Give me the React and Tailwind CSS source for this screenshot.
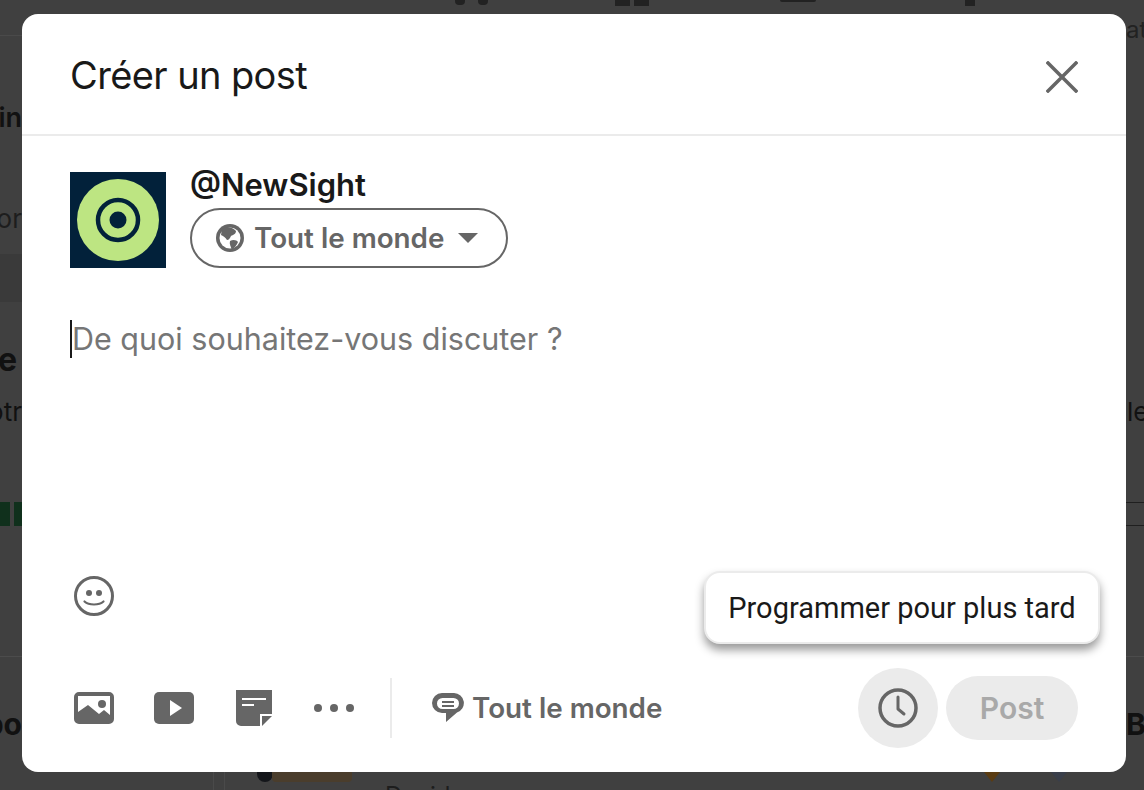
import React from 'react';

const font = { fontFamily: 'Inter, "Liberation Sans", sans-serif' };

// what shows of the dimmed page behind the modal
const Backdrop = () => (
    <div className="absolute inset-0 flex overflow-hidden text-[#111] font-semibold">
        <div className="flex w-[22px] shrink-0 flex-col items-end overflow-hidden">
            <div className="h-[36px] w-full shrink-0 border-b border-[#4a4a4a]" />
            <div className="h-[66px] w-full shrink-0" />
            <div className="h-[32px] shrink-0 whitespace-nowrap text-[27px] leading-[32px]">ain</div>
            <div className="h-[69px] w-full shrink-0" />
            <div className="h-[32px] shrink-0 whitespace-nowrap text-[26px] leading-[32px] font-normal text-[#1d1d1d]">mor</div>
            <div className="mt-[19px] h-[48px] w-full shrink-0 bg-[#3a3a3a]" />
            <div className="mt-[38px] mr-[5px] h-[40px] shrink-0 whitespace-nowrap text-[32px] leading-[40px] font-bold">e</div>
            <div className="mt-[16px] h-[32px] shrink-0 whitespace-nowrap text-[26px] leading-[32px] font-normal">otr</div>
            <div className="mt-[74px] flex h-[24px] w-full shrink-0 gap-[4px]">
                <div className="h-full w-[10px] bg-[#10301c]" />
                <div className="h-full w-[8px] bg-[#10301c]" />
            </div>
            <div className="mt-[130px] h-px w-full shrink-0 bg-[#4c4c4c]" />
            <div className="mt-[49px] h-[36px] shrink-0 whitespace-nowrap text-[30px] leading-[36px] font-bold">bo</div>
        </div>

        <div className="flex flex-1 flex-col justify-between">
            <div className="flex h-[14px] items-start pl-[433px]">
                <div className="h-[5px] w-[10px] rounded-b bg-[#222]" />
                <div className="ml-[13px] h-[5px] w-[10px] rounded-b bg-[#222]" />
                <div className="ml-[127px] h-[6px] w-[15px] bg-[#222]" />
                <div className="ml-[4px] h-[6px] w-[15px] bg-[#222]" />
                <div className="ml-[131px] h-[2px] w-[36px] rounded-b bg-[#222]" />
                <div className="ml-[149px] h-[6px] w-[10px] bg-[#222]" />
            </div>
            <div className="flex h-[18px] items-start overflow-hidden pl-[191px]">
                <div className="h-full w-px bg-[#4a4a4a]" />
                <div className="ml-[10px] h-full w-px bg-[#4a4a4a]" />
                <div className="ml-[32px] h-[10px] w-[16px] shrink-0 rounded-b-full bg-[#14161a]" />
                <div className="ml-[-1px] h-[10px] w-[80px] shrink-0 rounded-b bg-[#4a3d2c]" />
                <div className="ml-[33px] mt-[10px] shrink-0 text-[24px] leading-[28px] font-normal text-[#1d1d1d]">Decider</div>
                <div className="ml-[510px] h-0 w-0 shrink-0 border-x-[8px] border-t-[10px] border-x-transparent border-t-[#5a3c12]" />
                <div className="ml-[51px] h-0 w-0 shrink-0 border-x-[8px] border-t-[10px] border-x-transparent border-t-[#3a3f4a]" />
            </div>
        </div>

        <div className="flex w-[18px] shrink-0 flex-col overflow-hidden">
            <div className="h-[16px] shrink-0" />
            <div className="h-[28px] shrink-0 whitespace-nowrap text-[24px] leading-[28px] font-normal text-[#222]">at</div>
            <div className="h-[352px] shrink-0" />
            <div className="-ml-[15px] h-[32px] shrink-0 whitespace-nowrap text-[26px] leading-[32px] font-normal">ble</div>
            <div className="mt-[74px] h-px shrink-0 bg-[#1f1f1f]" />
            <div className="mt-[22px] h-px shrink-0 bg-[#1f1f1f]" />
            <div className="mt-[130px] h-px shrink-0 bg-[#4c4c4c]" />
            <div className="mt-[49px] h-[36px] shrink-0 whitespace-nowrap text-[30px] leading-[36px] font-bold">Bo</div>
        </div>
    </div>
);

const Logo = () => (
    <svg width="96" height="96" viewBox="0 0 96 96" className="shrink-0">
        <rect width="96" height="96" fill="#02213a" />
        <circle cx="48" cy="48" r="41" fill="#bde582" />
        <circle cx="48" cy="48" r="20" fill="none" stroke="#02213a" strokeWidth="4.5" />
        <circle cx="48" cy="48" r="8.5" fill="#02213a" />
    </svg>
);

const Globe = () => (
    <svg width="28" height="28" viewBox="0 0 28 28" className="shrink-0">
        <circle cx="14" cy="14" r="14" fill="#666" />
        <circle cx="14" cy="14" r="10.5" fill="#fff" />
        <path d="M6 5 C10 2 17 3 20 7 C20 10 17 11 15 12 C14 14 13 16 11 16 C9 13 7 12 5 11 Z" fill="#666" />
        <path d="M14 17 C17 15 21 16 22 18 C21 21 18 24 16 26 C15 23 13 20 14 17 Z" fill="#666" />
    </svg>
);

const Smiley = () => (
    <svg width="40" height="40" viewBox="0 0 40 40">
        <circle cx="20" cy="20" r="18.5" fill="none" stroke="#666" strokeWidth="3" />
        <circle cx="15" cy="17" r="3" fill="#666" />
        <circle cx="25" cy="17" r="3" fill="#666" />
        <path d="M10.5 25.5 C15 29.5 25 29.5 29.5 25.5" fill="none" stroke="#666" strokeWidth="2.2" strokeLinecap="round" />
    </svg>
);

const ImageIcon = () => (
    <svg width="40" height="32" viewBox="0 0 40 32">
        <path fillRule="evenodd" d="M5 0h30a5 5 0 0 1 5 5v22a5 5 0 0 1-5 5H5a5 5 0 0 1-5-5V5a5 5 0 0 1 5-5Zm-1 4v16l10-7 11 9 5-4 6 5V4Z" fill="#666" />
        <circle cx="28" cy="12" r="4" fill="#666" />
    </svg>
);

const PlayIcon = () => (
    <svg width="40" height="32" viewBox="0 0 40 32">
        <rect width="40" height="32" rx="5" fill="#666" />
        <path d="M16 8 L28 16 L16 24Z" fill="#fff" />
    </svg>
);

const DocIcon = () => (
    <svg width="36" height="36" viewBox="0 0 36 36">
        <path d="M0 0h36v24H24v12H5a5 5 0 0 1-5-5Z" fill="#666" />
        <rect x="6" y="8" width="24" height="2" fill="#fff" />
        <rect x="6" y="14" width="12" height="2" fill="#fff" />
        <path d="M36 26 L26 36 V26Z" fill="#666" />
    </svg>
);

const CommentIcon = () => (
    <svg width="32" height="30" viewBox="0 0 32 30" className="shrink-0">
        <path d="M10 0h12a10 10 0 0 1 3 19.5L14 29v-9h-4A10 10 0 0 1 10 0Z" fill="#666" />
        <rect x="5" y="5" width="22" height="11" rx="5.5" fill="#fff" />
        <rect x="10" y="8" width="12" height="2" fill="#666" />
        <rect x="10" y="12" width="12" height="2" fill="#666" />
    </svg>
);

const ClockIcon = () => (
    <svg width="40" height="40" viewBox="0 0 40 40">
        <circle cx="20" cy="20" r="18" fill="none" stroke="#666" strokeWidth="3.5" />
        <path d="M20 9v12l6 5" fill="none" stroke="#666" strokeWidth="3" strokeLinecap="round" strokeLinejoin="round" />
    </svg>
);

const App = () => {
    return (
        <div className="relative h-[790px] w-[1144px] overflow-hidden bg-[#404040]" style={font}>
            <Backdrop />

            <div className="relative ml-[22px] mt-[14px] flex h-[758px] w-[1104px] flex-col rounded-[16px] bg-white">
                <div className="flex h-[122px] shrink-0 items-center justify-between border-b-2 border-[#ebebeb] pl-12 pr-[48px]">
                    <h1 className="mt-[2px] text-[38px] leading-[44px] font-normal tracking-[-0.6px] text-[#191919]">Créer un post</h1>
                    <svg width="32" height="32" viewBox="0 0 32 32" className="mt-[5px]">
                        <path d="M2 2 L30 30 M30 2 L2 30" stroke="#666" strokeWidth="3.5" strokeLinecap="square" />
                    </svg>
                </div>

                <div className="flex flex-1 flex-col px-12">
                    <div className="flex gap-6 pt-9">
                        <Logo />
                        <div className="-mt-[5px] flex flex-col items-start">
                            <div className="mb-[5px] text-[31px] leading-[36px] font-semibold text-[#191919]">@NewSight</div>
                            <button className="flex h-[60px] w-[318px] items-center rounded-full border-2 border-[#666] pl-[24px] text-[#666]">
                                <Globe />
                                <span className="ml-[10px] pt-[2px] text-[27.8px] leading-none font-semibold">Tout le monde</span>
                                <svg width="20" height="12" viewBox="0 0 20 12" className="ml-[14px]">
                                    <path d="M0 1 H20 L10 11Z" fill="#666" />
                                </svg>
                            </button>
                        </div>
                    </div>

                    <div className="mt-[51px] flex h-[40px] items-center">
                        <div className="h-[38px] w-[2px] bg-[#191919]" />
                        <span className="text-[30.5px] leading-[40px] text-[#767676]">De quoi souhaitez-vous discuter ?</span>
                    </div>

                    <div className="mt-[217px] pl-[4px]">
                        <Smiley />
                    </div>

                    <div className="mt-[52px] flex h-[80px] items-center pl-[4px]">
                        <ImageIcon />
                        <div className="ml-[40px]"><PlayIcon /></div>
                        <div className="ml-[42px]"><DocIcon /></div>
                        <div className="ml-[42px] flex gap-[8px]">
                            <span className="h-[8px] w-[8px] rounded-full bg-[#666]" />
                            <span className="h-[8px] w-[8px] rounded-full bg-[#666]" />
                            <span className="h-[8px] w-[8px] rounded-full bg-[#666]" />
                        </div>
                        <div className="ml-[36px] h-[60px] w-[2px] bg-[#ebebeb]" />
                        <div className="ml-[40px] flex items-center gap-[8px] text-[#666]">
                            <CommentIcon />
                            <span className="pt-[2px] text-[27.8px] leading-none font-semibold">Tout le monde</span>
                        </div>
                        <div className="ml-auto flex items-center gap-2">
                            <div className="flex h-[80px] w-[80px] items-center justify-center rounded-full bg-[#ebebeb]">
                                <ClockIcon />
                            </div>
                            <button className="h-[64px] w-[132px] rounded-full bg-[#ebebeb] text-[30px] font-semibold text-[#a9a9a9]">Post</button>
                        </div>
                    </div>
                </div>

                {/* tooltip */}
                <div className="absolute left-[682px] top-[557px] flex h-[73px] w-[396px] items-center justify-center rounded-[16px] border-2 border-[#ebebeb] bg-white pt-[2px] text-[29px] leading-none text-[#191919] shadow-[0_6px_10px_rgba(0,0,0,0.4)]" style={{ fontFamily: 'Roboto, sans-serif' }}>
                    Programmer pour plus tard
                </div>
            </div>
        </div>
    );
};

export default App;
